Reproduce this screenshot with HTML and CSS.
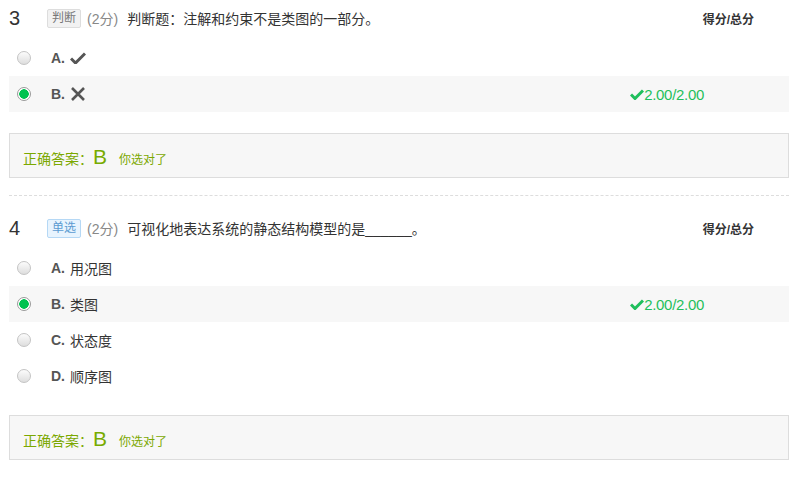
FILE: index.html
```html
<!DOCTYPE html>
<html lang="zh-CN">
<head>
  <meta charset="UTF-8" />
  <title>作业详情</title>
  <link rel="stylesheet" href="styles.css">
</head>
<body>
  <div class="paper">

    <div class="question">
      <div class="q-head">
        <span class="q-num">3</span>
        <span class="q-tag tag-judge">判断</span>
        <span class="q-point">(2分)</span>
        <span class="q-title">判断题：注解和约束不是类图的一部分。</span>
        <span class="q-total">得分/总分</span>
      </div>
      <ul class="options">
        <li class="option">
          <span class="radio"></span>
          <span class="opt-key">A.</span>
          <svg class="mark" width="16" height="12" viewBox="0 0 16 12"><path d="M1 6.5 L5.5 11 L15 1.5" fill="none" stroke="#555" stroke-width="3"/></svg>
        </li>
        <li class="option selected">
          <span class="radio checked"></span>
          <span class="opt-key">B.</span>
          <svg class="mark" width="16" height="16" viewBox="0 0 16 16"><path d="M2 2 L14 14 M14 2 L2 14" fill="none" stroke="#555" stroke-width="2.6"/></svg>
          <span class="opt-score">
            <svg width="14" height="11" viewBox="0 0 14 11"><path d="M1 5.5 L5 9.5 L13 1.5" fill="none" stroke="#1fbf5c" stroke-width="3"/></svg>2.00/2.00
          </span>
        </li>
      </ul>
      <div class="answer">正确答案：<span class="answer-key">B</span><span class="answer-note">你选对了</span></div>
    </div>

    <div class="question">
      <div class="q-head">
        <span class="q-num">4</span>
        <span class="q-tag tag-single">单选</span>
        <span class="q-point">(2分)</span>
        <span class="q-title">可视化地表达系统的静态结构模型的是______。</span>
        <span class="q-total">得分/总分</span>
      </div>
      <ul class="options">
        <li class="option">
          <span class="radio"></span>
          <span class="opt-key">A.</span>
          <span class="opt-text">用况图</span>
        </li>
        <li class="option selected">
          <span class="radio checked"></span>
          <span class="opt-key">B.</span>
          <span class="opt-text">类图</span>
          <span class="opt-score">
            <svg width="14" height="11" viewBox="0 0 14 11"><path d="M1 5.5 L5 9.5 L13 1.5" fill="none" stroke="#1fbf5c" stroke-width="3"/></svg>2.00/2.00
          </span>
        </li>
        <li class="option">
          <span class="radio"></span>
          <span class="opt-key">C.</span>
          <span class="opt-text">状态度</span>
        </li>
        <li class="option">
          <span class="radio"></span>
          <span class="opt-key">D.</span>
          <span class="opt-text">顺序图</span>
        </li>
      </ul>
      <div class="answer">正确答案：<span class="answer-key">B</span><span class="answer-note">你选对了</span></div>
    </div>

  </div>
</body>
</html>
```

FILE: styles.css
```css
body {
  margin: 0;
  background: #fff;
  font-family: "Liberation Sans", "Noto Sans CJK SC", sans-serif;
  font-size: 14px;
  color: #333;
}
.paper {
  padding: 0 3px 0 9px;
}
.question {
  padding-top: 14px;
  border-bottom: 1px dashed #ddd;
}
.question:first-child {
  padding-top: 0;
}
.q-head {
  display: flex;
  align-items: center;
  height: 36px;
  margin-bottom: 4px;
}
.q-num {
  width: 38px;
  font-size: 20px;
  color: #333;
}
.q-tag {
  font-size: 12px;
  line-height: 17px;
  padding: 0 4px;
  border: 1px solid #ddd;
  border-radius: 2px;
  margin-right: 6px;
}
.tag-judge {
  background: #f2f2f2;
  color: #777;
}
.tag-single {
  background: #e8f4fe;
  border-color: #b5d8f5;
  color: #5b9bd1;
}
.q-point {
  color: #888;
  margin-right: 9px;
}
.q-title {
  color: #333;
}
.q-total {
  margin-left: auto;
  padding-right: 35px;
  font-size: 12px;
  font-weight: bold;
  color: #333;
}
.options {
  list-style: none;
  margin: 0;
  padding: 0;
}
.option {
  display: flex;
  align-items: center;
  height: 36px;
  padding-left: 8px;
}
.option.selected {
  background: #f7f7f7;
}
.radio {
  box-sizing: border-box;
  width: 14px;
  height: 14px;
  border-radius: 50%;
  border: 1px solid #c4c4c4;
  background: linear-gradient(#fcfcfc, #dedede);
  margin-right: 20px;
}
.radio.checked {
  border-color: #9a9a9a;
  background: radial-gradient(circle, #00c250 0, #00c250 4.5px, #fff 5px);
}
.opt-key {
  font-weight: bold;
  color: #555;
  margin-right: 5px;
}
.opt-text {
  color: #333;
}
.mark {
  display: block;
}
.opt-score {
  display: flex;
  align-items: center;
  margin-left: auto;
  padding-right: 85px;
  font-size: 15px;
  letter-spacing: -0.3px;
  color: #1fbf5c;
}
.answer {
  box-sizing: border-box;
  height: 45px;
  margin: 21px 0 17px;
  padding: 11px 13px 0;
  border: 1px solid #ddd;
  background: #f7f7f7;
  line-height: 24px;
  color: #7ba800;
}
.answer-key {
  font-size: 21px;
  margin-right: 12px;
  color: #78ab00;
}
.answer-note {
  font-size: 12px;
}
```
